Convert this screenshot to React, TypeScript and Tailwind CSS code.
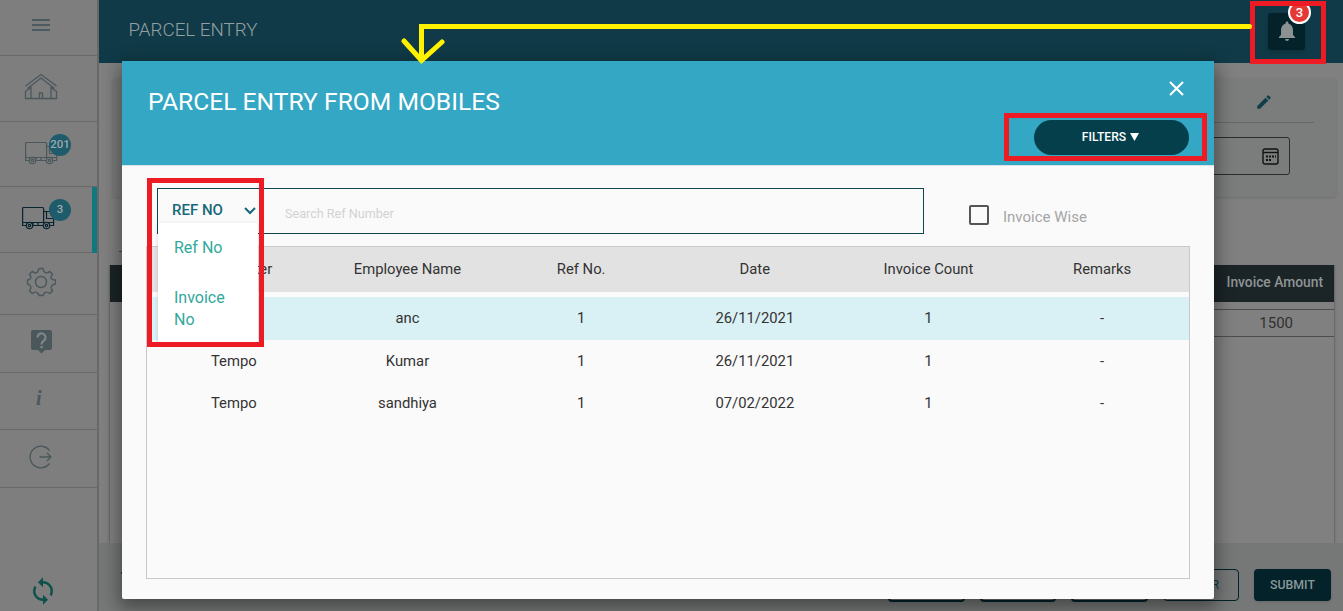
import type { ReactNode } from "react";
import { MdEdit, MdNotifications, MdSync } from "react-icons/md";

const columns = ["Transporter", "Employee Name", "Ref No.", "Date", "Invoice Count", "Remarks"];
const rows = [
  ["Tempo", "anc", "1", "26/11/2021", "1", "-"],
  ["Tempo", "Kumar", "1", "26/11/2021", "1", "-"],
  ["Tempo", "sandhiya", "1", "07/02/2022", "1", "-"],
];

function Truck() {
  return (
    <svg width="33" height="24" viewBox="0 0 33 24" fill="none" stroke="currentColor" strokeWidth="1.2">
      <rect x="0.600" y="1.500" width="21" height="15" rx="1" />
      <path d="M21.600 5.500h7l3 6v8h-3.500M24.500 5.500v7h7M0.600 16.500v3H4M11 19.500h10M11 16.500v3M16 16.500v3M21 16.500h10.600" />
      <circle cx="7.500" cy="19.500" r="3.200" />
      <circle cx="7.500" cy="19.500" r="1.200" />
      <circle cx="24.500" cy="19.500" r="3.200" />
      <circle cx="24.500" cy="19.500" r="1.200" />
    </svg>
  );
}

function House() {
  return (
    <svg width="34" height="27" viewBox="0 0 34 27" fill="none" stroke="currentColor" strokeWidth="1.3">
      <path d="M1.500 13 17 1.500 32.500 13M3.500 15.500 17 5l13.500 10.500M7 12.500V25.500M27 12.500V25.500M1.500 25.500V18.500L7 14.500M32.500 25.500V18.500L27 14.500M1 25.500h32M15.500 25.500v-5.500h3v5.500" />
    </svg>
  );
}

function Gear() {
  return (
    <svg width="30" height="30" viewBox="0 0 30 30" fill="none" stroke="currentColor" strokeWidth="1.4" strokeLinejoin="round">
      <circle cx="15" cy="15" r="5.500" />
      <path d="M13 1.500h4q.5 3.500 2.500 4.200t4.300-1.300l2.800 2.800q-2 2.600-1.300 4.300t4.200 1.500v4q-3.500.5-4.200 2.500t1.300 4.300l-2.800 2.800q-2.600-2-4.300-1.300t-2.500 3.200h-4q-.5-2.500-2.500-3.200t-4.300 1.300l-2.800-2.800q2-2.600 1.300-4.300T1.500 17v-4q2.500-.2 3.200-2T3.400 7.200l2.800-2.800q2.600 2 4.300 1.300T13 1.500z" />
    </svg>
  );
}

function Help() {
  return (
    <svg width="21" height="25" viewBox="0 0 21 25">
      <path fill="currentColor" d="M2 1h17a2 2 0 0 1 2 2v16a2 2 0 0 1-2 2h-5l-3.500 3.500L7 21H2a2 2 0 0 1-2-2V3a2 2 0 0 1 2-2z" />
      <path fill="none" stroke="#808686" strokeWidth="2.200" d="M6.500 8.500a4 4 0 1 1 6.300 3.200c-1.600 1.200-2.300 1.800-2.300 3.800M10.500 17v2.200" />
    </svg>
  );
}

function SideItem({ height, children }: { height: string; children: ReactNode }) {
  return <div className={`relative shrink-0 border-b border-[#696969] pl-[25px] text-[#4a585c] ${height}`}>{children}</div>;
}

function Count({ value }: { value: string }) {
  return (
    <span className="absolute top-3 left-[49px] flex size-[22px] items-center justify-center rounded-full bg-[#1e5b6b] pb-px text-[11.500px] font-medium text-[#9ba8aa]">
      {value}
    </span>
  );
}

function Sidebar() {
  return (
    <aside className="flex w-[99px] shrink-0 flex-col border-r-2 border-[#686868] bg-[#7e7e7e]">
      <SideItem height="h-14">
        <div className="ml-[7px] flex w-[18px] flex-col gap-[3px] pt-[19px]">
          <i className="h-0.5 bg-[#4d5b60]" />
          <i className="h-0.5 bg-[#4d5b60]" />
          <i className="h-0.5 bg-[#4d5b60]" />
        </div>
      </SideItem>
      <SideItem height="h-[66px]"><div className="-ml-px pt-[17px]"><House /></div></SideItem>
      <SideItem height="h-[65px]"><div className="pt-[19px]"><Truck /></div><Count value="201" /></SideItem>
      <SideItem height="h-[66px]">
        <div className="-ml-[3px] pt-[19px] text-[#06252e]"><Truck /></div>
        <Count value="3" />
        <span className="absolute top-0 right-0 h-[66px] w-[5px] bg-[#10797e]" />
      </SideItem>
      <SideItem height="h-[62px]"><div className="ml-px pt-3.5"><Gear /></div></SideItem>
      <SideItem height="h-[58px]"><div className="ml-1.5 pt-3.5"><Help /></div></SideItem>
      <SideItem height="h-[57px]">
        <div className="ml-[11px] pt-[13px] font-['Liberation_Serif',serif] text-xl leading-6 font-bold italic">i</div>
      </SideItem>
      <SideItem height="h-[58px]">
        <svg className="mt-[15px] ml-1" width="24" height="24" viewBox="0 0 24 24" fill="none" stroke="currentColor" strokeWidth="1.3">
          <path d="M20.500 5.500a10.800 10.800 0 1 0 0 13M10.500 12H22M18 8l4 4-4 4" />
        </svg>
      </SideItem>
      <MdSync className="mt-auto mb-[5px] ml-7 text-[#0c524b]" size={30} />
    </aside>
  );
}

function Page() {
  return (
    <div className="flex min-w-0 flex-1 flex-col bg-[#808080]">
      <header className="flex h-[63px] shrink-0 items-center justify-between bg-[#103a47] pr-[38px] pl-[29.500px]">
        <h1 className="pb-0.5 text-[18.800px] font-light text-[#939fa3]">PARCEL ENTRY</h1>
        <div className="relative flex h-[37px] w-[37px] items-center justify-center rounded-[3px] bg-[#03222a] pb-px text-[#8c9294] shadow-md">
          <MdNotifications size={24} />
          <span className="absolute -top-[12px] left-5 flex size-[23px] items-center justify-center rounded-full border-2 border-white bg-[#e53935] pt-px text-[13px] font-medium text-white">3</span>
        </div>
      </header>
      <section className="mt-[15px] mr-[7px] ml-3.5 flex h-[119px] shrink-0 flex-col items-end rounded-[3px] bg-[#7b7d7c] pr-[22px] shadow">
        <div className="flex h-[45px] w-[400px] justify-end border-b border-[#666] pt-[15px] pr-[41px]">
          <MdEdit size={18} className="text-[#103f4b]" />
        </div>
        <div className="mt-3.5 mr-6 flex h-[38px] w-[300px] items-center justify-end rounded-[3px] border border-[#292c2d] pr-2.5">
          <svg width="17" height="17" viewBox="0 0 17 17" fill="none" stroke="#111" strokeWidth="1.400">
            <rect x="1" y="1" width="15" height="15" rx="2" />
            <path d="M1 4.500h15" />
            <path d="M4 8.500h2m1 0h2m1 0h2m1 0h1M4 12h2m1 0h2" strokeWidth="2" />
          </svg>
        </div>
      </section>
      <div className="mt-[54px] ml-5 h-px w-[60px] bg-[#444]" />
      <section className="mt-[13px] mr-2 ml-2.5 flex-1 border-x border-[#696969] bg-[#808080] shadow">
        <div className="flex h-[37px] items-center justify-end bg-[#1b2427] pr-[11px] pb-[3px] text-[13.800px] font-medium text-[#8f9495]">Invoice Amount</div>
        <div className="mt-[7px] ml-auto flex h-7 w-[1180px] items-center justify-end border-y border-[#4d4d4d] pr-[41px] text-[15px] text-[#303030]">1500</div>
      </section>
      <footer className="flex h-[68px] shrink-0 items-start justify-end gap-[15px] bg-[#757877] pt-[26px] pr-3 text-[12.300px] font-medium">
        <span className="mt-[3px] mr-auto ml-[22px] h-0.5 w-3 bg-[#333]" />
        <div className="h-[33px] w-[77px] rounded-sm border-2 border-[#03222a]" />
        <div className="h-[33px] w-[76px] rounded-sm border-2 border-[#03222a]" />
        <div className="h-[33px] w-[77px] rounded-sm border-2 border-[#03222a]" />
        <div className="flex h-8 w-[76px] items-center justify-end rounded-sm border border-[#03222a] pr-[19px] font-normal text-[#123d49]">CLEAR</div>
        <button className="h-8 w-[77px] rounded-sm bg-[#03222a] text-[#8b9799] shadow">SUBMIT</button>
      </footer>
    </div>
  );
}

function Modal() {
  return (
    <div className="absolute top-[61px] left-[122px] flex h-[538px] w-[1092px] flex-col rounded-[2px] bg-[#fafafa] shadow-[0_6px_18px_3px_rgba(0,0,0,0.4)]">
      <div className="flex h-[105px] shrink-0 justify-between border-b border-[#d9e2e4] bg-[#33a7c3] pr-[25px] pl-[26px] text-white">
        <h2 className="pt-[24px] text-[24.650px] leading-[34px]">PARCEL ENTRY FROM MOBILES</h2>
        <div className="flex flex-col items-end">
          <svg className="mt-5 mr-[5px]" width="15" height="15" viewBox="0 0 15 15" stroke="white" strokeWidth="2.200">
            <path d="m1 1 13 13M14 1 1 14" />
          </svg>
          <button className="mt-6 flex h-[35px] w-[155px] items-center justify-center gap-1 rounded-full bg-[#053f4c] pr-0.5 pb-px text-[12.100px] font-medium">
            FILTERS
            <svg width="9" height="8" viewBox="0 0 9 8" fill="white"><path d="M0 0h9L4.500 8z" /></svg>
          </button>
        </div>
      </div>
      <div className="mt-[22px] ml-[35px] flex h-[46px] shrink-0">
        <div className="flex w-[767px] border border-[#114553]">
          <div className="relative w-[101px]">
            <div className="flex justify-between pt-[9px] pr-[3px] pl-3.5 text-[15px] leading-6 font-medium text-[#176879]">
              REF NO
              <svg className="mt-[9px]" width="12" height="8" viewBox="0 0 12 8" fill="none" stroke="currentColor" strokeWidth="2"><path d="m1 1 5 5 5-5" /></svg>
            </div>
            <div className="absolute top-[34px] left-0 z-10 h-[120px] w-[100px] bg-white px-4 pt-[14px] text-base leading-[22px] text-[#31a99b] shadow-[0_1px_4px_rgba(0,0,0,0.16)]">
              <div>Ref No</div>
              <div className="mt-7">Invoice<br />No</div>
            </div>
          </div>
          <span className="pt-[15px] pl-[26px] text-[12.600px] leading-5 text-[#d2d2d2]">Search Ref Number</span>
        </div>
        <label className="flex h-full items-center pt-3 pl-[45px] text-[15px] text-[#a5a5a5]">
          <span className="mr-3.5 mb-1 size-5 rounded-[2px] border-2 border-[#555]" />
          Invoice Wise
        </label>
      </div>
      <div className="mt-3 ml-6 h-[333px] w-[1044px] border border-[#c9c9c9] text-center text-[14.800px] text-[#333]">
        <div className="grid h-[45px] grid-cols-6 items-center bg-[#e2e2e2]">
          {columns.map((name) => <span key={name}>{name}</span>)}
        </div>
        <div className="mt-[5px]">
          {rows.map((row, index) => (
            <div key={index} className={`grid grid-cols-6 items-center ${index === 0 ? "h-[43px] bg-[#d9f0f4]" : "h-[42px]"}`}>
              {row.map((value, cell) => <span key={cell}>{value}</span>)}
            </div>
          ))}
        </div>
      </div>
    </div>
  );
}

export default function App() {
  return (
    <div className="relative flex h-[611px] w-[1343px] overflow-hidden font-[Roboto,sans-serif]">
      <Sidebar />
      <Page />
      <Modal />
      <div className="absolute top-[178px] left-[147px] z-20 h-[169px] w-[117px] border-[5px] border-[#ed1c24]" />
      <div className="absolute top-[113px] left-[1004px] h-12 w-[203px] border-[5px] border-[#ed1c24]" />
      <div className="absolute top-px left-[1250px] h-[63px] w-[76px] border-[5px] border-[#ed1c24]" />
      <svg className="pointer-events-none absolute inset-0" width="1343" height="611" fill="none" stroke="#fff200" strokeWidth="5" strokeLinecap="round">
        <path d="M1249.500 26.500H421.500V60M404 41l17.500 19.500L442 42" />
      </svg>
    </div>
  );
}
